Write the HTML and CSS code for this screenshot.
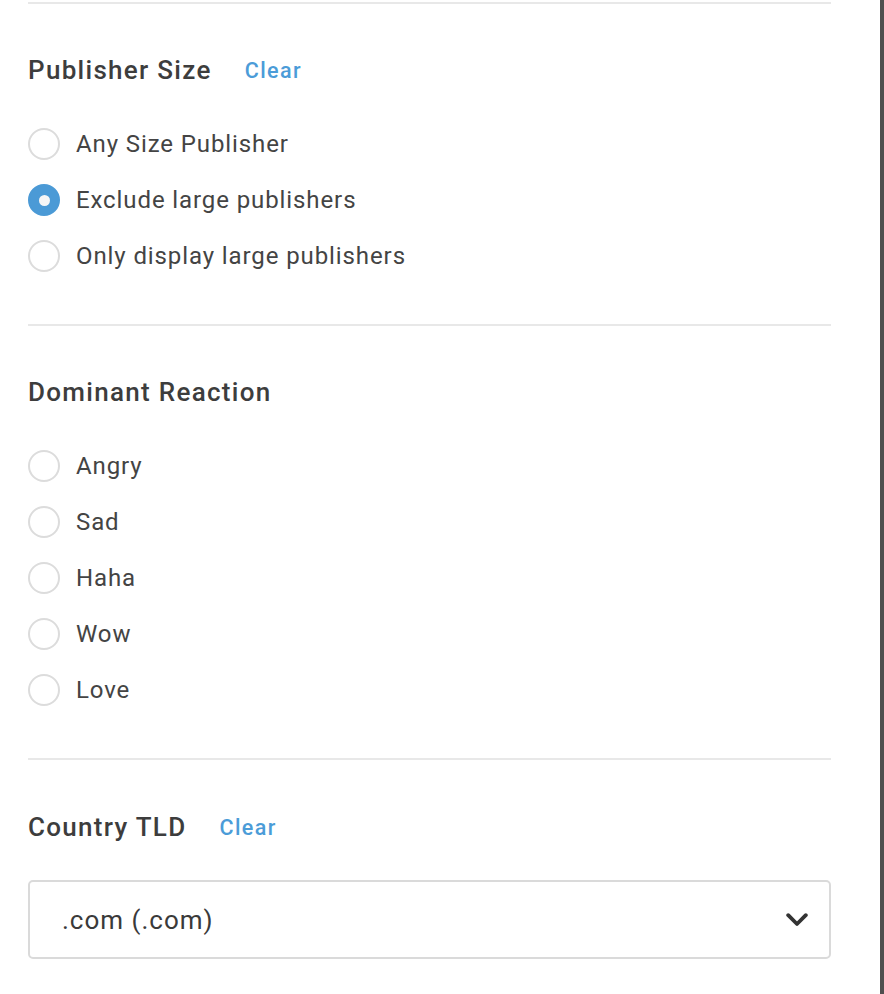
FILE: index.html
```html
<!DOCTYPE html>
<html lang="en">
<head>
<meta charset="utf-8">
<title>Filters</title>
<link rel="stylesheet" href="styles.css">
</head>
<body>
<div class="page">
  <main class="panel">
    <section class="filter">
      <div class="filter-head">
        <h2 class="filter-title">Publisher Size</h2>
        <a class="clear" href="#">Clear</a>
      </div>
      <ul class="options">
        <li class="option"><span class="radio"></span><span class="label">Any Size Publisher</span></li>
        <li class="option"><span class="radio checked"></span><span class="label">Exclude large publishers</span></li>
        <li class="option"><span class="radio"></span><span class="label">Only display large publishers</span></li>
      </ul>
    </section>
    <section class="filter">
      <div class="filter-head">
        <h2 class="filter-title">Dominant Reaction</h2>
      </div>
      <ul class="options">
        <li class="option"><span class="radio"></span><span class="label">Angry</span></li>
        <li class="option"><span class="radio"></span><span class="label">Sad</span></li>
        <li class="option"><span class="radio"></span><span class="label">Haha</span></li>
        <li class="option"><span class="radio"></span><span class="label">Wow</span></li>
        <li class="option"><span class="radio"></span><span class="label">Love</span></li>
      </ul>
    </section>
    <section class="filter last">
      <div class="filter-head">
        <h2 class="filter-title">Country TLD</h2>
        <a class="clear" href="#">Clear</a>
      </div>
      <div class="select">
        <span class="select-value">.com (.com)</span>
        <svg class="chevron" width="22" height="14" viewBox="0 0 22 14"><path d="M2.2 2.2 L11 11 L19.8 2.2" fill="none" stroke="#333" stroke-width="3.8" stroke-linecap="round" stroke-linejoin="round"/></svg>
      </div>
    </section>
  </main>
  <div class="edge"></div>
</div>
</body>
</html>
```
FILE: styles.css
```css
* { box-sizing: border-box; }
html, body { margin: 0; padding: 0; background: #fff; }
body { font-family: Roboto, "Noto Sans", sans-serif; color: #444; }
.page { display: flex; height: 994px; overflow: hidden; }
.panel { width: 880px; padding: 2px 49px 0 28px; }
.edge { width: 4px; background: #4f4f4f; }
.filter { border-top: 2px solid #e8e8e8; padding-top: 50px; padding-bottom: 40px; }
.filter.last { padding-top: 51px; }
.filter-head { display: flex; align-items: center; height: 32px; }
.filter-title { margin: 0; font-size: 26px; font-weight: 500; color: #3d3d3d; line-height: 32px; letter-spacing: 1.3px; }
.clear { margin-left: 33px; font-size: 21.5px; font-weight: 500; color: #4b9cd8; text-decoration: none; line-height: 32px; letter-spacing: 1.4px; position: relative; top: 1px; }
.options { list-style: none; margin: 30px 0 0; padding: 0; }
.option { display: flex; align-items: center; height: 56px; }
.radio { width: 32px; height: 32px; border-radius: 50%; border: 2px solid #dcdcdc; background: #fff; flex: none; display: flex; align-items: center; justify-content: center; }
.radio.checked { background: #4b9ad6; border-color: #4b9ad6; }
.radio.checked::after { content: ""; width: 11px; height: 11px; border-radius: 50%; background: #f6f6f6; }
.label { margin-left: 16px; font-size: 24px; color: #444; line-height: 32px; letter-spacing: 0.9px; }
.select { margin-top: 37px; height: 79px; border: 2px solid #dadada; border-radius: 5px; display: flex; align-items: center; justify-content: space-between; padding: 0 21px 0 32px; }
.select-value { font-size: 26px; color: #3a3a3a; letter-spacing: 1px; }
.chevron { display: block; margin-top: 1px; }
```
